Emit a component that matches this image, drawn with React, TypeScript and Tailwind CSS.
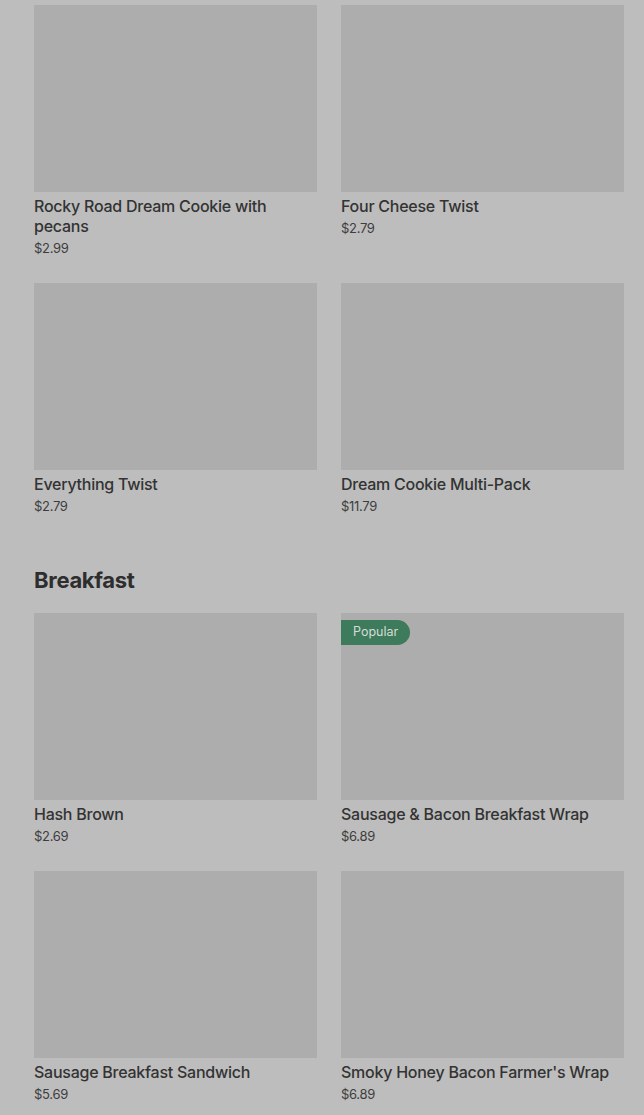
import React from "react";

type Item = { name: string; price: string; popular?: boolean };

const top: Item[] = [
  { name: "Rocky Road Dream Cookie with pecans", price: "$2.99" },
  { name: "Four Cheese Twist", price: "$2.79" },
  { name: "Everything Twist", price: "$2.79" },
  { name: "Dream Cookie Multi-Pack", price: "$11.79" },
];

const breakfast: Item[] = [
  { name: "Hash Brown", price: "$2.69" },
  { name: "Sausage & Bacon Breakfast Wrap", price: "$6.89", popular: true },
  { name: "Sausage Breakfast Sandwich", price: "$5.69" },
  { name: "Smoky Honey Bacon Farmer's Wrap", price: "$6.89" },
];

function Card({ item }: { item: Item }) {
  return (
    <div className="flex flex-col">
      <div className="relative h-[187px] bg-[#adadad]">
        {item.popular && (
          <div className="absolute left-0 top-[7px] h-[25px] flex items-center pl-[12px] pr-[12px] rounded-r-full bg-[#3e7a5c] text-[#d3ded7] text-[12.5px]">
            Popular
          </div>
        )}
      </div>
      <div className="mt-[4px] text-[16px] leading-[20px] font-medium text-[#333333] tracking-[-0.25px]">
        {item.name}
      </div>
      <div className="mt-[3px] text-[13px] leading-[18px] text-[#3d3d3d] tracking-[-0.3px]">
        {item.price}
      </div>
    </div>
  );
}

export default function App() {
  return (
    <div
      className="min-h-[1115px] bg-[#bdbdbd] pl-[34px] pr-[20px] pt-[5px] overflow-hidden"
      style={{ fontFamily: "Inter, 'Noto Sans', sans-serif" }}
    >
      <div className="grid grid-cols-2 gap-x-[24px] gap-y-[26px]">
        {top.map((i) => (
          <Card key={i.name} item={i} />
        ))}
      </div>
      <h2 className="mt-[51px] mb-[19px] text-[22px] leading-[28px] font-bold text-[#2e2e2e] tracking-[-0.3px]">
        Breakfast
      </h2>
      <div className="grid grid-cols-2 gap-x-[24px] gap-y-[26px]">
        {breakfast.map((i) => (
          <Card key={i.name} item={i} />
        ))}
      </div>
    </div>
  );
}
